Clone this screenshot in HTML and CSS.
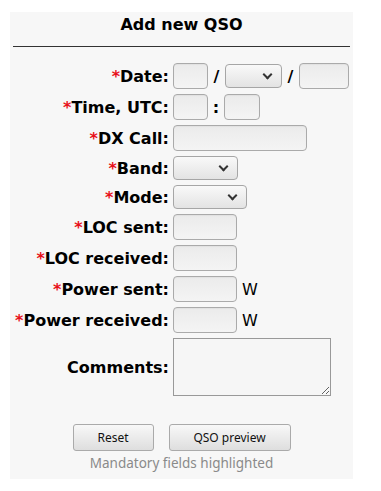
FILE: index.html
```html
<!DOCTYPE html>
<html lang="en">
<head>
  <meta charset="UTF-8" />
  <title>Add new QSO</title>
  <link rel="stylesheet" href="styles.css">
</head>
<body>

  <div class="panel">
    <h2 class="title">Add new QSO</h2>
    <hr class="rule">

    <form class="qso-form">
      <label class="lbl"><span class="req">*</span>Date:</label>
      <div class="field">
        <input type="text" class="inp w35">
        <span class="sep">/</span>
        <span class="sel-wrap"><select class="sel w57"></select></span>
        <span class="sep">/</span>
        <input type="text" class="inp w50">
      </div>

      <label class="lbl"><span class="req">*</span>Time, UTC:</label>
      <div class="field">
        <input type="text" class="inp w35">
        <span class="sep colon">:</span>
        <input type="text" class="inp w36">
      </div>

      <label class="lbl"><span class="req">*</span>DX Call:</label>
      <div class="field">
        <input type="text" class="inp w134">
      </div>

      <label class="lbl"><span class="req">*</span>Band:</label>
      <div class="field">
        <span class="sel-wrap"><select class="sel w65"></select></span>
      </div>

      <label class="lbl"><span class="req">*</span>Mode:</label>
      <div class="field">
        <span class="sel-wrap"><select class="sel w74"></select></span>
      </div>

      <label class="lbl"><span class="req">*</span>LOC sent:</label>
      <div class="field">
        <input type="text" class="inp w64">
      </div>

      <label class="lbl"><span class="req">*</span>LOC received:</label>
      <div class="field">
        <input type="text" class="inp w64">
      </div>

      <label class="lbl"><span class="req">*</span>Power sent:</label>
      <div class="field">
        <input type="text" class="inp w64">
        <span class="unit">W</span>
      </div>

      <label class="lbl"><span class="req">*</span>Power received:</label>
      <div class="field">
        <input type="text" class="inp w64">
        <span class="unit">W</span>
      </div>

      <label class="lbl">Comments:</label>
      <div class="field">
        <textarea class="comments"></textarea>
      </div>
    </form>

    <div class="actions">
      <button type="button" class="btn btn-reset">Reset</button>
      <button type="button" class="btn btn-preview">QSO preview</button>
    </div>
    <p class="note">Mandatory fields highlighted</p>
  </div>

</body>
</html>
```

FILE: styles.css
```css
* {
  box-sizing: border-box;
  margin: 0;
  padding: 0;
}
body {
  background: #fff;
  font-family: 'DejaVu Sans', sans-serif;
  color: #000;
}
.panel {
  width: 343px;
  margin: 12px 0 0 10px;
  padding: 3px 0 7px;
  background-color: #f7f7f7;
}
.title {
  text-align: center;
  font-size: 16px;
  font-weight: bold;
  line-height: 19px;
}
.rule {
  margin: 12px 3px 0;
  border: none;
  border-top: 1px solid #333;
}
.qso-form {
  display: grid;
  grid-template-columns: 159px 1fr;
  column-gap: 4px;
  row-gap: 5px;
  align-items: center;
  margin-top: 16px;
}
.lbl {
  text-align: right;
  font-size: 16px;
  font-weight: bold;
  white-space: nowrap;
}
.req {
  color: #e8101a;
}
.field {
  display: flex;
  align-items: center;
}
.inp {
  height: 26px;
  border: 1px solid #aaa;
  border-radius: 4px;
  background: linear-gradient(#ebebeb, #f4f4f4);
  box-shadow: inset 0 1px 1px rgba(0, 0, 0, 0.04);
}
.sel-wrap {
  position: relative;
  display: inline-block;
}
.sel-wrap::after {
  content: "";
  position: absolute;
  right: 11px;
  top: 7px;
  width: 5px;
  height: 5px;
  border-right: 2px solid #333;
  border-bottom: 2px solid #333;
  transform: rotate(45deg);
  pointer-events: none;
}
.sel {
  display: block;
  appearance: none;
  -webkit-appearance: none;
  height: 24px;
  border: 1px solid #a6a6a6;
  border-radius: 4px;
  background: linear-gradient(#f9f9f9, #e3e3e3);
}
.w35 { width: 35px; }
.w36 { width: 36px; }
.w50 { width: 50px; }
.w57 { width: 57px; }
.w64 { width: 64px; }
.w65 { width: 65px; }
.w74 { width: 74px; }
.w134 { width: 134px; }
.sep {
  font-size: 16px;
  font-weight: bold;
  width: 17px;
  text-align: center;
}
.colon {
  width: 16px;
}
.unit {
  font-size: 16px;
  margin-left: 5px;
}
.comments {
  width: 158px;
  height: 58px;
  border: 1px solid #999;
  background-color: #f6f6f6;
}
.actions {
  display: flex;
  justify-content: center;
  gap: 15px;
  margin-top: 28px;
}
.btn {
  height: 27px;
  font-family: 'Noto Sans', sans-serif;
  font-size: 12px;
  color: #111;
  border: 1px solid #aaa;
  border-radius: 3px;
  background: linear-gradient(#f8f8f8, #dedede);
  cursor: pointer;
}
.btn-reset {
  width: 81px;
}
.btn-preview {
  width: 122px;
}
.note {
  text-align: center;
  font-family: 'Noto Sans', sans-serif;
  font-size: 13.5px;
  color: #8a8a8a;
  line-height: 18px;
  margin-top: 3px;
}
```
